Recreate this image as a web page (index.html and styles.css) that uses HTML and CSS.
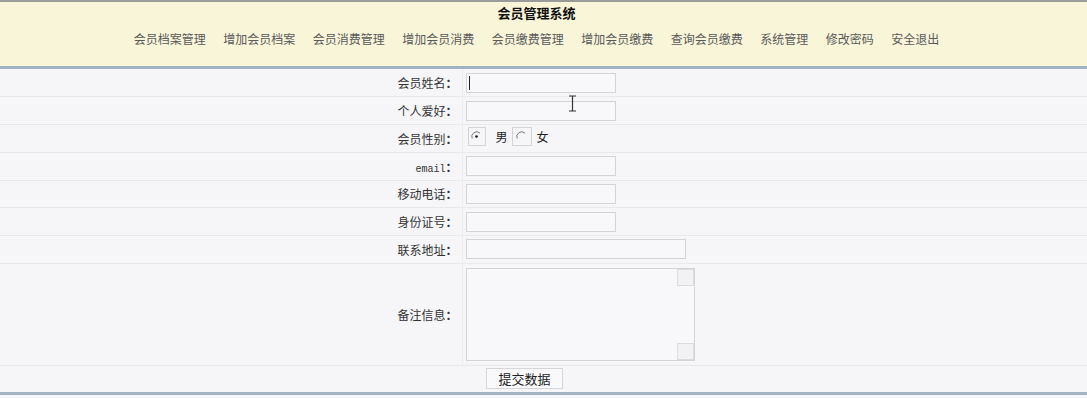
FILE: index.html
```html
<!DOCTYPE html>
<html lang="zh-CN">

<head>
  <meta charset="UTF-8">
  <title>会员管理系统</title>
  <link rel="stylesheet" href="styles.css">
</head>

<body>
  <div class="header">
    <div class="title">会员管理系统</div>
    <div class="nav">
      <a href="#">会员档案管理</a>
      <a href="#">增加会员档案</a>
      <a href="#">会员消费管理</a>
      <a href="#">增加会员消费</a>
      <a href="#">会员缴费管理</a>
      <a href="#">增加会员缴费</a>
      <a href="#">查询会员缴费</a>
      <a href="#">系统管理</a>
      <a href="#">修改密码</a>
      <a href="#">安全退出</a>
    </div>
  </div>

  <form class="form">
    <table class="form-table">
      <tr>
        <td class="label">会员姓名<span class="colon">：</span></td>
        <td class="field">
          <span class="input-wrap">
            <input type="text" class="text">
            <span class="caret"></span>
          </span>
        </td>
      </tr>
      <tr>
        <td class="label">个人爱好<span class="colon">：</span></td>
        <td class="field">
          <input type="text" class="text">
          <!-- mouse cursor from the capture -->
          <svg class="ibeam" width="9" height="17" viewBox="0 0 9 17">
            <path d="M1 1h7M1 16h7M4.5 1v15" stroke="#333" stroke-width="1.2" fill="none"/>
          </svg>
        </td>
      </tr>
      <tr>
        <td class="label">会员性别<span class="colon">：</span></td>
        <td class="field">
          <span class="radio-group">
            <span class="radio-box">
              <svg width="11" height="11" viewBox="0 0 11 11">
                <path d="M9 2.2A4.8 4.8 0 0 0 1.2 7.5" stroke="#777" fill="none"/>
                <circle cx="5.5" cy="5.5" r="1.3" fill="#111"/>
              </svg>
            </span>
            <span class="radio-text">男</span>
            <span class="radio-box">
              <svg width="11" height="11" viewBox="0 0 11 11">
                <path d="M9 2.2A4.8 4.8 0 0 0 1.2 7.5" stroke="#777" fill="none"/>
              </svg>
            </span>
            <span class="radio-text">女</span>
          </span>
        </td>
      </tr>
      <tr>
        <td class="label"><span class="mono">email</span><span class="colon">：</span></td>
        <td class="field"><input type="text" class="text"></td>
      </tr>
      <tr>
        <td class="label">移动电话<span class="colon">：</span></td>
        <td class="field"><input type="text" class="text"></td>
      </tr>
      <tr>
        <td class="label">身份证号<span class="colon">：</span></td>
        <td class="field"><input type="text" class="text"></td>
      </tr>
      <tr>
        <td class="label">联系地址<span class="colon">：</span></td>
        <td class="field"><input type="text" class="text wide"></td>
      </tr>
      <tr class="tall">
        <td class="label">备注信息<span class="colon">：</span></td>
        <td class="field">
          <div class="memo">
            <span class="scroll-btn"></span>
            <span class="scroll-btn"></span>
          </div>
        </td>
      </tr>
      <tr>
        <td colspan="2" class="submit-cell">
          <button type="button" class="submit">提交数据</button>
        </td>
      </tr>
    </table>
  </form>
</body>

</html>
```

FILE: styles.css
```css
body {
  margin: 0;
  background-color: #f6f6f8;
  font-family: "Noto Sans CJK SC", "Liberation Sans", sans-serif;
  font-size: 12px;
  color: #333;
}

.header {
  background-color: #f9f5d9;
  border-top: 2px solid #9a9c9a;
  border-bottom: 3px solid #a2b3c4;
  height: 64px;
  padding-right: 14px;
  text-align: center;
}

.title {
  font-size: 13px;
  font-weight: bold;
  color: #111;
  line-height: 18px;
  padding-top: 2px;
}

.nav {
  display: flex;
  justify-content: center;
  gap: 17.5px;
  margin-top: 9px;
  line-height: 16px;
}

.nav a {
  color: #5a5a5a;
  text-decoration: none;
}

.form-table {
  width: 100%;
  border-collapse: collapse;
}

.form-table tr {
  height: 27.75px;
  border-bottom: 1px solid #e9e9eb;
}

.form-table tr.tall {
  height: 102px;
}

.form-table tr:last-child {
  border-bottom: 3px solid #a2b3c4;
}

.form-table td {
  padding: 0;
}

.label {
  width: 462px;
  text-align: right;
  padding-right: 4px !important;
  border-right: 1px solid #ececee;
  box-sizing: border-box;
}

/* centred full-width colon, as in the old song-style fonts */
.colon {
  font-family: "Noto Sans CJK TC", sans-serif;
  font-weight: bold;
}

.mono {
  font-family: "Liberation Mono", "DejaVu Sans Mono", monospace;
  font-size: 10px;
}

.field {
  padding-left: 3px !important;
  position: relative;
}

.input-wrap {
  position: relative;
  display: inline-block;
  vertical-align: middle;
}

.text {
  display: block;
  width: 150px;
  height: 20px;
  box-sizing: border-box;
  border: 1px solid #d4d4d6;
  background-color: #f8f8fa;
  margin: 0;
  padding: 0 3px;
}

.text.wide {
  width: 220px;
}

.caret {
  position: absolute;
  left: 3px;
  top: 3px;
  width: 1px;
  height: 14px;
  background-color: #222;
}

.ibeam {
  position: absolute;
  left: 105px;
  top: -2px;
}

.radio-group {
  display: flex;
  align-items: center;
  margin-top: -3px;
}

.radio-box {
  width: 18px;
  height: 19px;
  box-sizing: border-box;
  border: 1px solid #d4d4d6;
  display: flex;
  align-items: center;
  justify-content: center;
  margin-left: 2px;
}

.radio-box + .radio-text + .radio-box {
  width: 20px;
  margin-left: 0;
}

.radio-text {
  margin: 0 4px 0 10px;
  color: #222;
}

.radio-text:last-child {
  margin-left: 5px;
}

.memo {
  width: 229px;
  height: 93px;
  box-sizing: border-box;
  border: 1px solid #d4d4d6;
  background-color: #f8f8fa;
  display: flex;
  flex-direction: column;
  align-items: flex-end;
  justify-content: space-between;
}

.scroll-btn {
  width: 17px;
  height: 17px;
  box-sizing: border-box;
  border: 1px solid #dcdcde;
  background-color: #f2f2f4;
}

.submit-cell {
  padding-left: 486px !important;
}

.submit {
  width: 77px;
  height: 21px;
  border: 1px solid #d6d6d8;
  background-color: #f9f9fb;
  font-family: "Noto Sans CJK SC", sans-serif;
  font-size: 13px;
  color: #222;
  padding: 0;
  line-height: 19px;
  display: block;
}
```
